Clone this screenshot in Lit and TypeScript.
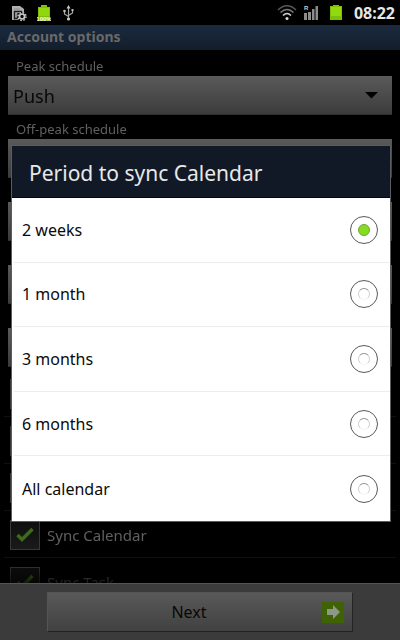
import { LitElement, html, css } from "lit";
import { customElement, state } from "lit/decorators.js";

interface Schedule {
  id: string;
  label: string;
  value: string;
}

interface SyncItem {
  id: string;
  label: string;
}

@customElement("status-bar")
export class StatusBar extends LitElement {
  static styles = css`
    :host {
      display: flex;
      align-items: center;
      height: 25px;
      padding: 0 5px 0 12px;
      background: #000;
      box-sizing: border-box;
    }
    svg {
      display: block;
    }
    .group {
      display: flex;
      align-items: center;
      gap: 10px;
    }
    .right {
      margin-left: auto;
      gap: 7px;
    }
    .clock {
      margin-left: 5px;
      font-size: 16px;
      line-height: 24px;
      font-weight: 700;
      color: #e6e6e6;
    }
  `;

  render() {
    return html`
      <div class="group">
        <svg width="15" height="18" viewBox="0 0 15 18">
          <path d="M0 2H8L12 5V16H0Z" fill="#b0b0b0" />
          <path d="M2 5H8" stroke="#8a8a8a" />
          <path d="M2.500 15.500V7.500H10M5 10H8M5.500 9.500V14.500M3 14.500H8" stroke="#1c1c1c" stroke-width="1.400" fill="none" />
          <circle cx="10" cy="12.500" r="4.800" fill="#0c0c0c" />
          <circle cx="10" cy="12.500" r="2.500" fill="none" stroke="#ccc" stroke-width="1.600" />
          <circle cx="10" cy="12.500" r="4" fill="none" stroke="#ccc" stroke-width="1.400" stroke-dasharray="1.600 1.540" />
        </svg>
        <svg width="14" height="18" viewBox="0 0 14 18">
          <path d="M4 1H10V3H13V17H1V3H4Z" fill="#7cc00a" />
          <path d="M2 4H12V12H2Z" fill="#92d60e" />
          <text x="7" y="17" text-anchor="middle" font-size="6" font-weight="700" fill="#fff" font-family="Liberation Sans, sans-serif">100%</text>
        </svg>
        <svg width="16" height="18" viewBox="0 0 16 18">
          <path d="M7.500 15V3M7.500 12.500L3.500 10V7M7.500 11.500L11.500 9V6" stroke="#a8a8a8" stroke-width="1.200" fill="none" />
          <path d="M7.500 1L9.500 4.500H5.500Z" fill="#c8c8c8" />
          <circle cx="3.500" cy="7" r="1.300" fill="#bbb" />
          <rect x="10.500" y="5" width="2" height="2" fill="#bbb" />
          <circle cx="7.500" cy="15" r="1.600" fill="#ccc" />
        </svg>
      </div>
      <div class="group right">
        <svg width="20" height="17" viewBox="0 0 20 17">
          <path d="M1 6Q10 -2.500 19 6" stroke="#585858" stroke-width="1.500" fill="none" />
          <path d="M3.500 8.500Q10 2.500 16.500 8.500" stroke="#7c7c7c" stroke-width="1.500" fill="none" />
          <path d="M6 11.500Q10 7.500 14 11.500" stroke="#d4d4d4" stroke-width="1.500" fill="none" />
          <circle cx="10" cy="14.500" r="1.500" fill="#ddd" />
        </svg>
        <svg width="19" height="17" viewBox="0 0 19 17">
          <path d="M0 16V9H3V16ZM4 16V8H7V16ZM8 16V5H10.500V16ZM11.500 16V2H14V16Z" fill="#8c8c8c" />
          <text x="0" y="6" font-size="6" font-weight="700" fill="#ccc" font-family="Liberation Sans, sans-serif">R</text>
        </svg>
        <svg width="12" height="17" viewBox="0 0 12 17">
          <path d="M3 1H9V2H12V16H0V2H3Z" fill="#7cc00a" />
          <path d="M1 3H11V12H1Z" fill="#94d80e" />
        </svg>
        <span class="clock">08:22</span>
      </div>
    `;
  }
}

@customElement("period-dialog")
export class PeriodDialog extends LitElement {
  @state() private selected = "2 weeks";

  private options = ["2 weeks", "1 month", "3 months", "6 months", "All calendar"];

  static styles = css`
    :host {
      display: block;
      flex: 1;
      border: 1px solid #5a5d60;
      background: #fff;
      box-sizing: border-box;
    }
    h2 {
      margin: 0;
      padding: 11px 17px 8px;
      background: #111926;
      border-bottom: 1px solid #05070a;
      color: #e8e8e8;
      font-size: 21px;
      line-height: 32px;
      font-weight: 400;
    }
    fieldset {
      display: grid;
      grid-auto-rows: 1fr;
      height: 323px;
      margin: 0;
      padding: 0 0 0 2px;
      border: 0;
    }
    .option {
      display: flex;
      align-items: center;
      justify-content: space-between;
      padding: 0 12px 0 8px;
      border-bottom: 1px solid #ececec;
      color: #0a0a0a;
      font-size: 16px;
      line-height: 24px;
    }
    .option:last-child {
      border-bottom: 0;
    }
    .radio {
      appearance: none;
      width: 28px;
      height: 28px;
      margin: 0;
      border: 1px solid #55585c;
      border-radius: 50%;
      display: grid;
      place-items: center;
      background: #fff;
      box-sizing: border-box;
    }
    .radio::before {
      content: "";
      width: 12px;
      height: 12px;
      border-radius: 50%;
      box-sizing: border-box;
      border: 1px solid #f4f4f4;
      border-top-color: #909090;
      border-left-color: #d0d0d0;
      border-right-color: #d0d0d0;
    }
    .radio:checked::before {
      border: 1px solid #6fa52c;
      background: #86dc22;
    }
  `;

  render() {
    return html`
      <h2 id="title">Period to sync Calendar</h2>
      <fieldset aria-labelledby="title">
        ${this.options.map(
          (o) => html`
            <label class="option">
              <span>${o}</span>
              <input
                class="radio"
                type="radio"
                name="period"
                .value=${o}
                .checked=${o === this.selected}
                @change=${() => (this.selected = o)}
              />
            </label>
          `
        )}
      </fieldset>
    `;
  }
}

@customElement("app-root")
export class AppRoot extends LitElement {
  private schedules: Schedule[] = [
    { id: "peak", label: "Peak schedule", value: "Push" },
    { id: "off-peak", label: "Off-peak schedule", value: "" },
    { id: "s3", label: "", value: "" },
    { id: "s4", label: "", value: "" },
    { id: "s5", label: "", value: "" },
  ];

  private items: SyncItem[] = [
    { id: "c1", label: "" },
    { id: "c2", label: "" },
    { id: "c3", label: "" },
    { id: "calendar", label: "Sync Calendar" },
    { id: "task", label: "Sync Task" },
  ];

  static styles = css`
    :host {
      display: flex;
      flex-direction: column;
      position: relative;
      height: 100vh;
      overflow: hidden;
      background: #000;
      font-family: "Noto Sans", "Open Sans", sans-serif;
    }
    .title {
      margin: 0;
      padding: 0 7px;
      height: 25px;
      flex: none;
      background: linear-gradient(#1b2a3e, #131e2c);
      color: #696969;
      font-size: 14px;
      line-height: 24px;
      font-weight: 700;
    }
    .list {
      flex: 1;
      min-height: 0;
      overflow: hidden;
      padding: 2px 4px 0;
      mask-image: linear-gradient(#000 calc(100% - 20px), #0004);
    }
    .fields {
      padding: 0 4px 3px;
    }
    .field {
      display: flex;
      flex-direction: column;
    }
    .field-label {
      height: 24px;
      padding-left: 8px;
      color: #606060;
      font-size: 13px;
      line-height: 28px;
    }
    .select-box {
      display: grid;
      align-items: center;
    }
    .select-box > * {
      grid-area: 1 / 1;
    }
    .arrow {
      justify-self: end;
      margin-right: 14px;
      pointer-events: none;
    }
    select {
      appearance: none;
      width: 100%;
      height: 39px;
      padding: 2px 5px 0;
      border: 0;
      border-bottom: 1px solid #303030;
      border-radius: 0;
      background: linear-gradient(#5a5a5a, #3c3c3c);
      color: #080808;
      font-family: inherit;
      font-size: 18px;
      line-height: 26px;
    }
    .check-row {
      display: flex;
      align-items: center;
      gap: 7px;
      height: 47px;
      padding: 2px 6px 0;
      border-bottom: 1px solid #101010;
      box-sizing: border-box;
      color: #606060;
      font-size: 15px;
      line-height: 24px;
    }
    .check-box {
      display: grid;
      place-items: center;
    }
    .check-box > * {
      grid-area: 1 / 1;
    }
    .check-box svg {
      pointer-events: none;
    }
    .check {
      appearance: none;
      width: 30px;
      height: 30px;
      margin: 0;
      border: 1px solid #383838;
      background: linear-gradient(#0e0e0e, #1a1a1a);
      box-sizing: border-box;
    }
    .footer {
      flex: none;
      padding: 8px 47px;
      border-top: 1px solid #555;
      background: #3b3b3b;
    }
    .next {
      display: grid;
      grid-template-columns: 1fr auto;
      align-items: center;
      width: 100%;
      height: 40px;
      padding: 0 8px;
      border: 1px solid #555;
      border-right-color: #252525;
      border-bottom-color: #222;
      border-radius: 0;
      background: linear-gradient(#595959, #414141);
      color: #080808;
      font-family: inherit;
      font-size: 16px;
      line-height: 24px;
    }
    .overlay {
      position: absolute;
      inset: 25px 0 0;
      display: flex;
      align-items: center;
      padding: 2px 9px 0 11px;
    }
  `;

  render() {
    return html`
      <status-bar></status-bar>
      <h1 class="title">Account options</h1>
      <div class="list">
        <div class="fields">
          ${this.schedules.map(
            (s) => html`
              <div class="field">
                <label class="field-label" for=${s.id}>${s.label}</label>
                <div class="select-box">
                  <select id=${s.id}>
                    <option>${s.value}</option>
                  </select>
                  <svg class="arrow" width="13" height="7" viewBox="0 0 13 7">
                    <path d="M0 0H13L6.500 6.500Z" fill="#000" />
                  </svg>
                </div>
              </div>
            `
          )}
        </div>
        ${this.items.map(
          (i) => html`
            <label class="check-row">
              <span class="check-box">
                <input class="check" type="checkbox" .checked=${true} />
                <svg width="18" height="16" viewBox="0 0 18 16">
                  <path d="M1.500 8L6 12.500L16.500 2" stroke="#3d6a1b" stroke-width="3.500" fill="none" />
                </svg>
              </span>
              <span>${i.label}</span>
            </label>
          `
        )}
      </div>
      <div class="footer">
        <button class="next" type="button">
          <span>Next</span>
          <svg width="22" height="21" viewBox="0 0 22 21">
            <rect width="22" height="21" fill="#3f6205" />
            <path d="M5 7H11V3L18 10L11 17V13H5Z" fill="#8f978a" />
          </svg>
        </button>
      </div>
      <div class="overlay">
        <period-dialog role="dialog" aria-label="Period to sync Calendar"></period-dialog>
      </div>
    `;
  }
}
